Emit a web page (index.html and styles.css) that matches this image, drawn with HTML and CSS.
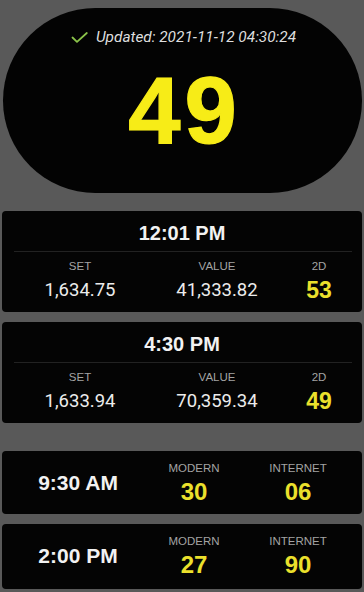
FILE: index.html
```html
<!DOCTYPE html>
<html>
<head>
<meta charset="utf-8">
<link rel="stylesheet" href="styles.css">
</head>
<body>
<div class="page">
  <div class="hero">
    <div class="updated">
      <svg class="check" width="17" height="11" viewBox="0 0 17 11"><polyline points="1.5,5.5 6,9.8 15.8,1" fill="none" stroke="#8bc34a" stroke-width="1.8" stroke-linecap="round" stroke-linejoin="round"/></svg>
      <span>Updated: 2021-11-12 04:30:24</span>
    </div>
    <div class="big">49</div>
  </div>

  <div class="card result first">
    <div class="title">12:01 PM</div>
    <div class="divider"></div>
    <div class="cols">
      <div class="col"><div class="label">SET</div><div class="val">1,634.75</div></div>
      <div class="col"><div class="label">VALUE</div><div class="val">41,333.82</div></div>
      <div class="col"><div class="label">2D</div><div class="val yellow">53</div></div>
    </div>
  </div>

  <div class="card result">
    <div class="title">4:30 PM</div>
    <div class="divider"></div>
    <div class="cols">
      <div class="col"><div class="label">SET</div><div class="val">1,633.94</div></div>
      <div class="col"><div class="label">VALUE</div><div class="val">70,359.34</div></div>
      <div class="col"><div class="label">2D</div><div class="val yellow">49</div></div>
    </div>
  </div>

  <div class="card mini first-mini">
    <div class="time">9:30 AM</div>
    <div class="col"><div class="label">MODERN</div><div class="num">30</div></div>
    <div class="col"><div class="label">INTERNET</div><div class="num">06</div></div>
  </div>

  <div class="card mini last">
    <div class="time">2:00 PM</div>
    <div class="col"><div class="label">MODERN</div><div class="num">27</div></div>
    <div class="col"><div class="label">INTERNET</div><div class="num">90</div></div>
  </div>
</div>
</body>
</html>
```

FILE: styles.css
```css
html, body {
  margin: 0;
  padding: 0;
  background: #595959;
}
body {
  font-family: Roboto, "Liberation Sans", sans-serif;
  color: #f2f2f2;
}
.page {
  display: flex;
  flex-direction: column;
  padding: 8px 2px 0 2px;
}
.hero {
  margin-left: 1px;
  height: 185px;
  border-radius: 93px;
  background: #030303;
  display: flex;
  flex-direction: column;
  align-items: center;
}
.updated {
  margin-top: 19px;
  height: 20px;
  display: flex;
  align-items: center;
  gap: 8px;
  font-style: italic;
  font-size: 15.4px;
  color: #dedede;
  padding-left: 2px;
}
.check {
  display: block;
  margin-top: 1px;
}
.big {
  margin-top: 14px;
  font-family: "Liberation Sans", Arial, sans-serif;
  font-size: 94px;
  line-height: 100px;
  height: 100px;
  font-weight: 700;
  color: #f7ec17;
  -webkit-text-stroke: 1.2px #f7ec17;
  letter-spacing: 4px;
  padding-left: 4px;
}
.card {
  background: #040404;
  border-radius: 4px;
}
.result {
  margin-top: 10px;
  padding: 8px 0 10px 0;
}
.result.first {
  margin-top: 18px;
}
.title {
  text-align: center;
  font-family: "Liberation Sans", Arial, sans-serif;
  font-size: 20px;
  font-weight: 700;
  line-height: 28px;
  padding-bottom: 4px;
}
.divider {
  height: 1px;
  background: #222222;
  margin: 0 10px 0 12px;
}
.cols {
  display: grid;
  grid-template-columns: 156px 118px 1fr;
  margin-top: 7px;
}
.col {
  display: flex;
  flex-direction: column;
  align-items: center;
}
.label {
  font-family: "Liberation Sans", Arial, sans-serif;
  font-size: 11.5px;
  line-height: 14px;
  color: #a3a3a3;
}
.val {
  margin-top: 5px;
  font-size: 18.5px;
  line-height: 24px;
  color: #ececec;
}
.val.yellow {
  font-family: "Liberation Sans", Arial, sans-serif;
  font-weight: 700;
  font-size: 23px;
  color: #ebe02c;
}
.mini {
  margin-top: 10px;
  display: grid;
  grid-template-columns: 152px 80px 1fr;
  align-items: start;
  padding: 10px 0 9px 0;
}
.mini.first-mini {
  margin-top: 28px;
}
.mini.last {
  padding-bottom: 11px;
}
.time {
  align-self: center;
  text-align: center;
  font-family: "Liberation Sans", Arial, sans-serif;
  font-size: 21px;
  font-weight: 700;
  line-height: 28px;
}
.num {
  margin-top: 4px;
  font-family: "Liberation Sans", Arial, sans-serif;
  font-size: 24px;
  line-height: 26px;
  font-weight: 700;
  color: #ebe02c;
}
```
